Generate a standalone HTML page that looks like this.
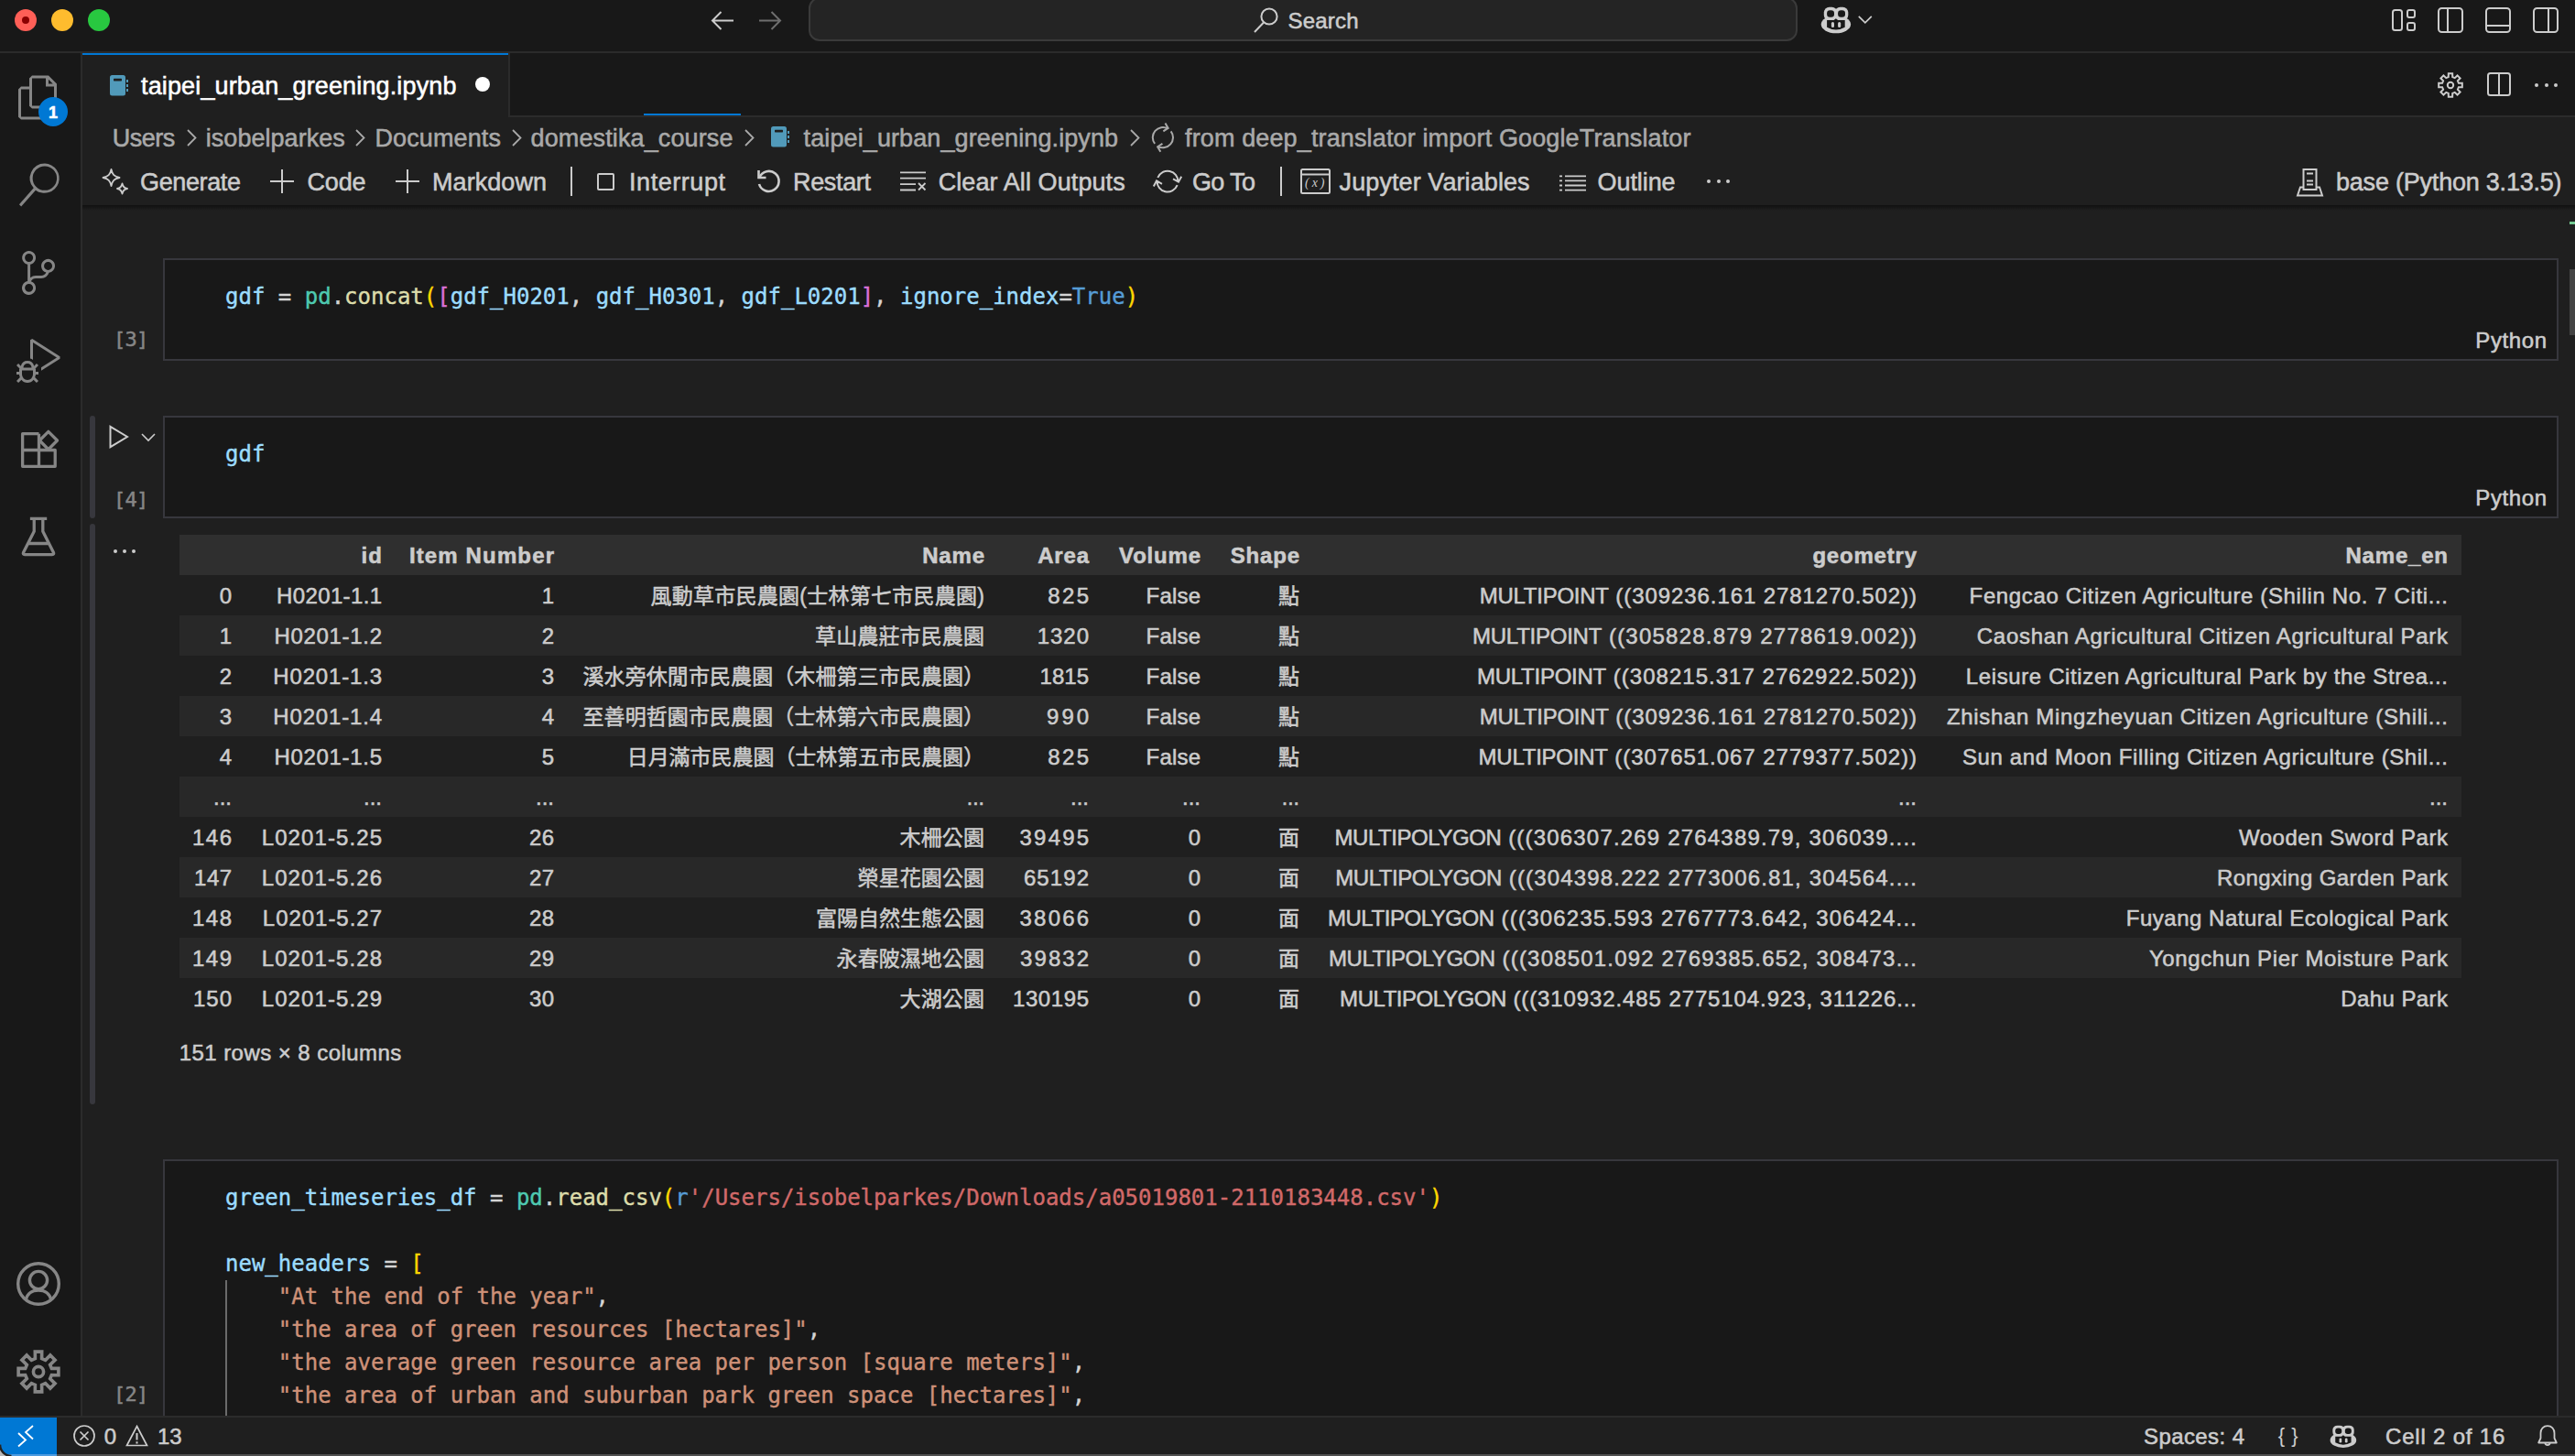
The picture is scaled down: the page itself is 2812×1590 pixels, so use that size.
<!DOCTYPE html><html lang="en"><head><meta charset="utf-8"><title>taipei_urban_greening.ipynb</title><style>
*{box-sizing:border-box;margin:0;padding:0}
html,body{width:2812px;height:1590px;overflow:hidden;background:#1f1f1f}
body{position:relative;-webkit-text-stroke:0.55px;font-family:'Liberation Sans','Noto Sans CJK TC',sans-serif;font-size:26px;color:#ccc;-webkit-font-smoothing:antialiased}
.abs{position:absolute}
.t{position:absolute;white-space:pre;line-height:1}
svg{position:absolute;overflow:visible}
#titlebar{left:0;top:0;width:2812px;height:56px;background:#181818}
#tbline{left:0;top:56px;width:2812px;height:2px;background:#2b2b2b}
#activity{left:0;top:58px;width:88px;height:1488px;background:#181818}
#actline{left:88px;top:58px;width:2px;height:1488px;background:#2b2b2b}
#tabbar{left:90px;top:58px;width:2722px;height:68px;background:#181818}
#tabbarline{left:90px;top:126px;width:2722px;height:2px;background:#2b2b2b}
#tab{left:90px;top:58px;width:465px;height:70px;background:#1f1f1f;border-top:2px solid #0078d4}
#tabr{left:555px;top:58px;width:2px;height:68px;background:#2b2b2b}
#prog{left:703px;top:124px;width:106px;height:2px;background:#0078d4}
#shadow{left:90px;top:224px;width:2722px;height:6px;background:linear-gradient(#00000078,#00000000)}
.cell{position:absolute;left:178px;width:2616px;background:#181818;border:2px solid #37373d}
.code{position:absolute;-webkit-text-stroke:0.4px;left:246px;font-family:'DejaVu Sans Mono','Liberation Mono',monospace;font-size:24px;line-height:36px;white-space:pre;color:#ccc}
.v{color:#9cdcfe}.c{color:#4ec9b0}.f{color:#dcdcaa}.y{color:#ffd700}.m{color:#da70d6}.k{color:#569cd6}.s{color:#ce9178}.r{color:#d16969}.w{color:#d4d4d4}
.exec{position:absolute;font-family:'DejaVu Sans Mono','Liberation Mono',monospace;font-size:22px;color:#868686;line-height:1;white-space:pre}
.lang{position:absolute;font-size:24px;color:#ccc;line-height:1;white-space:pre}
.exec{-webkit-text-stroke:0.5px;letter-spacing:-0.8px}
.focus{position:absolute;left:98px;width:6px;border-radius:3px;background:#37373d}
table{position:absolute;left:196px;top:584px;border-collapse:collapse;table-layout:fixed;font-size:24px;color:#ccc;width:2492px}
td,th{height:44px;text-align:right;padding:2px 15px 0 0;white-space:pre;overflow:visible;font-weight:400;line-height:42px;vertical-align:top}
th{font-weight:700}
thead tr{background:#2f2f2f}
tbody tr:nth-child(even){background:#282828}
#status{left:0;top:1546px;width:2812px;height:44px;background:#1f1f1f;border-top:2px solid #2b2b2b}
#remote{left:0;top:1548px;width:62px;height:42px;background:#0078d4;border-bottom-left-radius:12px}
</style></head><body>
<div class="abs" id="titlebar"></div><div class="abs" id="tbline"></div>
<div class="abs" style="left:16px;top:10px;width:24px;height:24px;border-radius:50%;background:#ff5f57"></div>
<div class="abs" style="left:24px;top:18px;width:8px;height:8px;border-radius:50%;background:#8b0000"></div>
<div class="abs" style="left:56px;top:10px;width:24px;height:24px;border-radius:50%;background:#febc2e"></div>
<div class="abs" style="left:96px;top:10px;width:24px;height:24px;border-radius:50%;background:#28c840"></div>
<svg style="left:776px;top:12px" width="26" height="22" viewBox="0 0 26 22" fill="none" stroke="#ccc" stroke-width="2"><path d="M25 10.5H2M11.5 1L2 10.5l9.5 9.5"/></svg>
<svg style="left:828px;top:12px" width="26" height="22" viewBox="0 0 26 22" fill="none" stroke="#6f6f6f" stroke-width="2"><path d="M1 10.5h23M14.5 1l9.5 9.5-9.5 9.5"/></svg>
<div class="abs" style="left:883px;top:-3px;width:1080px;height:48px;border-radius:12px;background:#242424;border:2px solid #3a3a3a"></div>
<svg style="left:1369px;top:8px" width="27" height="28" viewBox="0 0 27 28" fill="none" stroke="#ccc" stroke-width="2"><circle cx="17" cy="10" r="8.6"/><path d="M11 16.5L1 27"/></svg>
<svg style="left:1988px;top:7px" width="34" height="30" viewBox="0 0 34 30"><ellipse cx="16.900" cy="19.600" rx="16.200" ry="9.700" fill="#ccc"/>
<rect x="3.800" y=".750" width="14.600" height="14.500" rx="5.800" fill="#ccc"/><rect x="15.700" y=".750" width="14.600" height="14.500" rx="5.800" fill="#ccc"/>
<rect x="7.100" y="4.200" width="7.900" height="7.600" rx="3.200" fill="#181818"/><rect x="19.100" y="4.200" width="7.900" height="7.600" rx="3.200" fill="#181818"/>
<path d="M7.100 15H14.700L16.900 13.200L19.100 15H26.700V22.700Q16.900 28.300 7.100 22.700Z" fill="#181818"/>
<rect x="11.900" y="17.050" width="3.100" height="5.900" rx="1.550" fill="#ccc"/><rect x="19.100" y="17.050" width="3.100" height="5.900" rx="1.550" fill="#ccc"/></svg>
<svg style="left:2029px;top:17.200px" width="16" height="9" viewBox="0 0 16 9" fill="none" stroke="#ccc" stroke-width="1.700"><path d="M.800 .800l7 7 7-7"/></svg>
<svg style="left:2612px;top:10px" width="27" height="24" viewBox="0 0 27 24" fill="none" stroke="#ccc" stroke-width="2"><rect x="1" y="1" width="10" height="22" rx="2.5" /><rect x="17" y="1" width="8" height="8" rx="2" /><rect x="17" y="15" width="8" height="8" rx="2" /></svg>
<svg style="left:2662px;top:8px" width="28" height="28" viewBox="0 0 28 28" fill="none" stroke="#ccc" stroke-width="2"><rect x="1" y="1" width="26" height="26" rx="3.5" /><path d="M11 1v26"/></svg>
<svg style="left:2714px;top:8px" width="28" height="28" viewBox="0 0 28 28" fill="none" stroke="#ccc" stroke-width="2"><rect x="1" y="1" width="26" height="26" rx="3.5" /><path d="M1 20h26"/></svg>
<svg style="left:2766px;top:8px" width="28" height="28" viewBox="0 0 28 28" fill="none" stroke="#ccc" stroke-width="2"><rect x="1" y="1" width="26" height="26" rx="3.5" /><path d="M17 1v26"/></svg>
<div class="abs" id="activity"></div><div class="abs" id="actline"></div>
<svg style="left:18px;top:82px" width="46" height="50" viewBox="0 0 23 24.500" fill="#868686"><path d="M17.500 0h-9L7 1.500V6H2.500L1 7.500v15.070L2.500 24h12.070L16 22.570V18h4.700l1.300-1.430V4.500L17.500 0zm0 2.120l2.380 2.380H17.500V2.120zm-3 20.380h-12v-15H7v9.070L8.500 18h6v4.500zm6-6h-12v-15H16V6h4.500v10.500z"/></svg>
<div class="abs" style="left:42px;top:106px;width:32px;height:32px;border-radius:50%;background:#0078d4"></div>
<svg style="left:18.500px;top:178px" width="46" height="48" viewBox="0 0 23.500 24" fill="#868686"><path d="M15.250 0a8.250 8.250 0 0 0-6.180 13.720L1 22.880l1.120 1.120 8.050-9.120A8.251 8.251 0 1 0 15.250.010V0zm0 15a6.750 6.750 0 1 1 0-13.500 6.750 6.750 0 0 1 0 13.500z"/></svg>
<svg style="left:18px;top:274px" width="44" height="48" viewBox="0 0 22 24" fill="#868686"><path d="M21.007 8.222A3.738 3.738 0 0 0 15.045 5.200a3.737 3.737 0 0 0 1.156 6.583 2.988 2.988 0 0 1-2.668 1.670h-2.990a4.456 4.456 0 0 0-2.989 1.165V7.400a3.737 3.737 0 1 0-1.494 0v9.117a3.776 3.776 0 1 0 1.816.099 2.990 2.990 0 0 1 2.668-1.667h2.990a4.484 4.484 0 0 0 4.223-3.039 3.736 3.736 0 0 0 3.250-3.687zM4.565 3.738a2.242 2.242 0 1 1 4.484 0 2.242 2.242 0 0 1-4.484 0zm4.484 16.441a2.242 2.242 0 1 1-4.484 0 2.242 2.242 0 0 1 4.484 0zm8.221-9.715a2.242 2.242 0 1 1 0-4.485 2.242 2.242 0 0 1 0 4.485z"/></svg>
<svg style="left:18px;top:370px" width="48" height="48" viewBox="0 0 24 24" fill="#868686"><path d="M10.940 13.500l-1.320 1.320a3.730 3.730 0 0 0-7.240 0L1.060 13.500 0 14.560l1.720 1.720-.220.220V18H0v1.500h1.500v.080c.077.489.214.966.410 1.420L0 22.940 1.060 24l1.650-1.650A4.308 4.308 0 0 0 6 24a4.310 4.310 0 0 0 3.290-1.650L10.940 24 12 22.940 10.090 21c.198-.464.336-.951.410-1.450v-.100H12V18h-1.500v-1.500l-.220-.220L12 14.560l-1.060-1.060zM6 13.500a2.250 2.250 0 0 1 2.250 2.250h-4.500A2.250 2.250 0 0 1 6 13.500zm3 6a3.330 3.330 0 0 1-3 3 3.330 3.330 0 0 1-3-3v-2.250h6v2.250zm14.760-9.900v1.260L13.500 17.370V15.600l8.500-5.370L9 2v9.460a5.070 5.070 0 0 0-1.500-.720V.630L8.640 0l15.120 9.600z"/></svg>
<svg style="left:21px;top:467px" width="46" height="46" viewBox="0 0 46 46" fill="none" stroke="#868686" stroke-width="3.300" stroke-linejoin="round"><path d="M21.500 6.650H3.620V42.350H39.220V24.500H3.620M21.500 6.650V42.350"/><path d="M31.860 4.370l9.670 9.670-9.670 9.670-9.670-9.670z"/></svg>
<svg style="left:22px;top:563px" width="40" height="46" viewBox="0 0 40 46" fill="none" stroke="#868686" stroke-width="3.300" stroke-linejoin="round"><path d="M10.860 3.400H29.200M15.250 3.400V17.300L3.600 40.200Q2.600 42.550 5 42.550H35Q37.400 42.550 36.400 40.200L24.800 17.300V3.400M8.500 30.500H31.500"/></svg>
<svg style="left:18px;top:1378px" width="48" height="48" viewBox="0 0 48 48" fill="none" stroke="#868686" stroke-width="3.400"><circle cx="24" cy="24" r="22.300"/><circle cx="24" cy="20" r="9.600"/><path d="M10.200 41.500c1.500-7 7-10.500 13.800-10.500s12.300 3.500 13.800 10.500"/></svg>
<svg style="left:18px;top:1474px" width="48" height="48" viewBox="0 0 48 48" fill="none" stroke="#868686" stroke-width="3.600" stroke-linejoin="miter"><path d="M20.40 9.64 L20.31 2.11 L27.69 2.11 L27.60 9.64 L31.61 11.31 L36.87 5.91 L42.09 11.13 L36.69 16.39 L38.36 20.40 L45.89 20.31 L45.89 27.69 L38.36 27.60 L36.69 31.61 L42.09 36.87 L36.87 42.09 L31.61 36.69 L27.60 38.36 L27.69 45.89 L20.31 45.89 L20.40 38.36 L16.39 36.69 L11.13 42.09 L5.91 36.87 L11.31 31.61 L9.64 27.60 L2.11 27.69 L2.11 20.31 L9.64 20.40 L11.31 16.39 L5.91 11.13 L11.13 5.91 L16.39 11.31Z"/><circle cx="24" cy="24" r="5.600"/></svg>
<div class="abs" id="tabbar"></div><div class="abs" id="tabbarline"></div><div class="abs" id="tab"></div><div class="abs" id="tabr"></div><div class="abs" id="prog"></div>
<svg style="left:119.500px;top:81.500px" width="20" height="22.500" viewBox="0 0 20 22.500"><rect x="0" y="0" width="17" height="22.500" rx="2.500" fill="#519aba"/><rect x="4" y="3.800" width="9" height="2.600" rx=".6" fill="#1f1f1f"/><rect x="18" y="5" width="2" height="3" fill="#519aba"/><rect x="18" y="10" width="2" height="3" fill="#519aba"/><rect x="18" y="15" width="2" height="3" fill="#519aba"/></svg>
<div class="abs" style="left:519px;top:84px;width:16px;height:16px;border-radius:50%;background:#fff"></div>
<svg style="left:2662px;top:79px" width="28" height="28" viewBox="0 0 28 28" fill="none" stroke="#ccc" stroke-width="2"><path d="M11.76 5.08 L11.84 1.18 L16.16 1.18 L16.24 5.08 L18.73 6.11 L21.54 3.41 L24.59 6.46 L21.89 9.27 L22.92 11.76 L26.82 11.84 L26.82 16.16 L22.92 16.24 L21.89 18.73 L24.59 21.54 L21.54 24.59 L18.73 21.89 L16.24 22.92 L16.16 26.82 L11.84 26.82 L11.76 22.92 L9.27 21.89 L6.46 24.59 L3.41 21.54 L6.11 18.73 L5.08 16.24 L1.18 16.16 L1.18 11.84 L5.08 11.76 L6.11 9.27 L3.41 6.46 L6.46 3.41 L9.27 6.11Z"/><circle cx="14" cy="14" r="3.200"/></svg>
<svg style="left:2716px;top:79px" width="26" height="26" viewBox="0 0 26 26" fill="none" stroke="#ccc" stroke-width="2"><rect x="1" y="1" width="24" height="24" rx="2.5" /><path d="M13 1v24"/></svg>
<div class="abs" style="left:2768.0px;top:91px;width:4px;height:4px;border-radius:50%;background:#ccc"></div>
<div class="abs" style="left:2778.5px;top:91px;width:4px;height:4px;border-radius:50%;background:#ccc"></div>
<div class="abs" style="left:2789.0px;top:91px;width:4px;height:4px;border-radius:50%;background:#ccc"></div>
<svg style="left:204px;top:141px" width="11" height="19" viewBox="0 0 11 19" fill="none" stroke="#a9a9a9" stroke-width="1.800"><path d="M1 1l8.500 8.500L1 18"/></svg>
<svg style="left:388px;top:141px" width="11" height="19" viewBox="0 0 11 19" fill="none" stroke="#a9a9a9" stroke-width="1.800"><path d="M1 1l8.500 8.500L1 18"/></svg>
<svg style="left:559px;top:141px" width="11" height="19" viewBox="0 0 11 19" fill="none" stroke="#a9a9a9" stroke-width="1.800"><path d="M1 1l8.500 8.500L1 18"/></svg>
<svg style="left:812.5px;top:141px" width="11" height="19" viewBox="0 0 11 19" fill="none" stroke="#a9a9a9" stroke-width="1.800"><path d="M1 1l8.500 8.500L1 18"/></svg>
<svg style="left:1233.5px;top:141px" width="11" height="19" viewBox="0 0 11 19" fill="none" stroke="#a9a9a9" stroke-width="1.800"><path d="M1 1l8.500 8.500L1 18"/></svg>
<svg style="left:842px;top:138px" width="20" height="22.500" viewBox="0 0 20 22.500"><rect x="0" y="0" width="17" height="22.500" rx="2.500" fill="#519aba"/><rect x="4" y="3.800" width="9" height="2.600" rx=".6" fill="#1f1f1f"/><rect x="18" y="5" width="2" height="3" fill="#519aba"/><rect x="18" y="10" width="2" height="3" fill="#519aba"/><rect x="18" y="15" width="2" height="3" fill="#519aba"/></svg>
<svg style="left:0;top:0" width="2812" height="300" viewBox="0 0 2812 300" fill="none" stroke="#a9a9a9" stroke-width="2" stroke-linejoin="miter"><path d="M1261.15 156.93A11.1 11.1 0 0 1 1275.37 140.44M1270.35 143.30L1275.66 139.92L1272.46 134.49M1278.65 143.27A11.1 11.1 0 0 1 1264.43 159.76M1269.45 156.90L1264.14 160.28L1267.34 165.71"/></svg>
<svg style="left:111px;top:184px" width="30" height="30" viewBox="0 0 30 30" fill="none" stroke="#ccc" stroke-width="1.800" stroke-linejoin="round"><path d="M10.500 1c1.200 5.800 3.200 7.800 9 9-5.800 1.200-7.800 3.200-9 9-1.200-5.800-3.200-7.800-9-9 5.800-1.200 7.800-3.200 9-9z"/><path d="M22.500 16.500c.7 3.500 2 4.800 5.500 5.500-3.500.7-4.800 2-5.500 5.500-.7-3.500-2-4.800-5.500-5.500 3.500-.7 4.800-2 5.500-5.500z"/></svg>
<svg style="left:295px;top:185px" width="26" height="26" viewBox="0 0 26 26" fill="none" stroke="#ccc" stroke-width="2"><path d="M13 0v26M0 13h26"/></svg>
<svg style="left:432px;top:185px" width="26" height="26" viewBox="0 0 26 26" fill="none" stroke="#ccc" stroke-width="2"><path d="M13 0v26M0 13h26"/></svg>
<div class="abs" style="left:622.500px;top:182px;width:2px;height:32px;background:#ccc"></div>
<div class="abs" style="left:652px;top:189px;width:18.500px;height:18.500px;border:2.200px solid #ccc;border-radius:2px"></div>
<svg style="left:826px;top:185px" width="27" height="26" viewBox="0 0 27 26" fill="none" stroke="#ccc" stroke-width="2.600"><path d="M3.500 8.500A11 11 0 1 1 3 16"/><path d="M2.500 1v8h8" stroke-linejoin="miter"/></svg>
<svg style="left:983px;top:187px" width="30" height="22" viewBox="0 0 30 22" fill="none" stroke="#ccc" stroke-width="1.800"><path d="M0 1.300h28M0 7.700h28M0 14.100h17M0 20.500h17M20 13l7.500 7.500M27.500 13l-7.500 7.500"/></svg>
<svg style="left:0;top:0" width="2812" height="300" viewBox="0 0 2812 300" fill="none" stroke="#ccc" stroke-width="2" stroke-linejoin="miter"><path d="M1264.36 194.01A11.4 11.4 0 0 1 1286.38 198.70M1281.04 195.43L1286.98 198.73L1290.18 192.72M1285.64 202.19A11.4 11.4 0 0 1 1263.62 197.50M1268.96 200.77L1263.02 197.47L1259.82 203.48"/></svg>
<div class="abs" style="left:1398px;top:182px;width:2px;height:32px;background:#ccc"></div>
<svg style="left:1419.500px;top:184px" width="33" height="28" viewBox="0 0 33 28" fill="none" stroke="#ccc" stroke-width="2"><rect x="1" y="1" width="31" height="26" rx="1.500"/><path d="M1 6.500h31"/></svg>
<svg style="left:1703px;top:191px" width="29" height="18" viewBox="0 0 29 18" fill="none" stroke="#ccc" stroke-width="1.800"><path d="M0 1.400h3M6 1.400h23M0 6.450h3M6 6.450h23M0 11.500h3M6 11.500h23M0 16.550h3M6 16.550h23"/></svg>
<div class="abs" style="left:1864.0px;top:196px;width:4px;height:4px;border-radius:50%;background:#ccc"></div>
<div class="abs" style="left:1874.5px;top:196px;width:4px;height:4px;border-radius:50%;background:#ccc"></div>
<div class="abs" style="left:1885.0px;top:196px;width:4px;height:4px;border-radius:50%;background:#ccc"></div>
<svg style="left:2508px;top:183.500px" width="29" height="31" viewBox="0 0 29 31" fill="none" stroke="#ccc" stroke-width="2"><path d="M7.500 1h14v22h-14zM7.500 20.500H4L1 29.500h27l-3-9h-3.500M11 5.500h7M11 13.500h7M11 17.500h7"/></svg>
<div class="abs" id="shadow"></div>
<div class="cell" style="top:282px;height:112px"></div>
<div class="code" style="top:306px"><span class="v">gdf</span> <span class="w">=</span> <span class="c">pd</span><span class="w">.</span><span class="f">concat</span><span class="y">(</span><span class="m">[</span><span class="v">gdf_H0201</span><span class="w">,</span> <span class="v">gdf_H0301</span><span class="w">,</span> <span class="v">gdf_L0201</span><span class="m">]</span><span class="w">,</span> <span class="v">ignore_index</span><span class="w">=</span><span class="k">True</span><span class="y">)</span></div>
<div class="exec" style="left:124px;top:360.400px">[3]</div>
<div class="cell" style="top:454px;height:112px"></div>
<div class="code" style="top:478px"><span class="v">gdf</span></div>
<div class="exec" style="left:124px;top:535.100px">[4]</div>
<div class="focus" style="top:454px;height:112px"></div><div class="focus" style="top:572px;height:634px"></div>
<svg style="left:119px;top:464px" width="22" height="26" viewBox="0 0 22 26" fill="none" stroke="#ccc" stroke-width="2" stroke-linejoin="miter"><path d="M1.500 1.800L20 13 1.500 24.200z"/></svg>
<svg style="left:154px;top:473px" width="16" height="9" viewBox="0 0 16 9" fill="none" stroke="#ccc" stroke-width="1.600"><path d="M1 1l7 7 7-7"/></svg>
<div class="abs" style="left:124px;top:600px;width:4px;height:4px;border-radius:50%;background:#ccc"></div>
<div class="abs" style="left:134px;top:600px;width:4px;height:4px;border-radius:50%;background:#ccc"></div>
<div class="abs" style="left:144px;top:600px;width:4px;height:4px;border-radius:50%;background:#ccc"></div>
<div class="abs" style="left:2806px;top:294px;width:6px;height:72px;background:#434343"></div>
<div class="abs" style="left:2806px;top:242px;width:6px;height:3px;background:#73c991"></div>
<table><colgroup><col style="width:72px"><col style="width:164px"><col style="width:188px"><col style="width:470px"><col style="width:114px"><col style="width:122px"><col style="width:108px"><col style="width:674px"><col style="width:580px"></colgroup><thead><tr><th style="letter-spacing:0.800px;padding-right:14.200px;"></th><th style="letter-spacing:1.272px;padding-right:13.728px;">id</th><th style="letter-spacing:1.140px;padding-right:13.860px;">Item Number</th><th style="letter-spacing:0.800px;padding-right:14.200px;">Name</th><th style="letter-spacing:0.800px;padding-right:14.200px;">Area</th><th style="letter-spacing:0.800px;padding-right:14.200px;">Volume</th><th style="letter-spacing:0.800px;padding-right:14.200px;">Shape</th><th style="letter-spacing:0.800px;padding-right:14.200px;">geometry</th><th style="letter-spacing:0.800px;padding-right:14.200px;">Name_en</th></tr></thead><tbody><tr><td style="letter-spacing:0.400px;padding-right:14.600px;">0</td><td style="letter-spacing:0.353px;padding-right:14.647px;">H0201-1.1</td><td style="letter-spacing:0.400px;padding-right:14.600px;">1</td><td style="font-size:23px;letter-spacing:0.267px;padding-right:14.733px;">風動草市民農園(士林第七市民農園)</td><td style="letter-spacing:2.377px;padding-right:12.623px;">825</td><td style="letter-spacing:0.200px;padding-right:14.800px;">False</td><td style="font-size:23px;">點</td><td style="letter-spacing:0.924px;padding-right:14.076px"><span style="letter-spacing:-0.25px">MULTIPOINT</span> ((309236.161 2781270.502))</td><td style="letter-spacing:0.629px;padding-right:14.371px;">Fengcao Citizen Agriculture (Shilin No. 7 Citi...</td></tr><tr><td style="letter-spacing:0.400px;padding-right:14.600px;">1</td><td style="letter-spacing:0.690px;padding-right:14.310px;">H0201-1.2</td><td style="letter-spacing:0.400px;padding-right:14.600px;">2</td><td style="font-size:23px;letter-spacing:0.143px;padding-right:14.857px;">草山農莊市民農園</td><td style="letter-spacing:0.970px;padding-right:14.030px;">1320</td><td style="letter-spacing:0.200px;padding-right:14.800px;">False</td><td style="font-size:23px;">點</td><td style="letter-spacing:1.220px;padding-right:13.780px"><span style="letter-spacing:-0.25px">MULTIPOINT</span> ((305828.879 2778619.002))</td><td style="letter-spacing:0.695px;padding-right:14.305px;">Caoshan Agricultural Citizen Agricultural Park</td></tr><tr><td style="letter-spacing:0.400px;padding-right:14.600px;">2</td><td style="letter-spacing:0.828px;padding-right:14.172px;">H0201-1.3</td><td style="letter-spacing:0.400px;padding-right:14.600px;">3</td><td style="font-size:23px;letter-spacing:0.083px;padding-right:14.917px;">溪水旁休閒市民農園（木柵第三市民農園）</td><td style="letter-spacing:0.036px;padding-right:14.964px;">1815</td><td style="letter-spacing:0.200px;padding-right:14.800px;">False</td><td style="font-size:23px;">點</td><td style="letter-spacing:1.028px;padding-right:13.972px"><span style="letter-spacing:-0.25px">MULTIPOINT</span> ((308215.317 2762922.502))</td><td style="letter-spacing:0.626px;padding-right:14.374px;">Leisure Citizen Agricultural Park by the Strea...</td></tr><tr><td style="letter-spacing:0.400px;padding-right:14.600px;">3</td><td style="letter-spacing:0.828px;padding-right:14.172px;">H0201-1.4</td><td style="letter-spacing:0.400px;padding-right:14.600px;">4</td><td style="font-size:23px;letter-spacing:0.083px;padding-right:14.917px;">至善明哲園市民農園（士林第六市民農園）</td><td style="letter-spacing:2.927px;padding-right:12.073px;">990</td><td style="letter-spacing:0.200px;padding-right:14.800px;">False</td><td style="font-size:23px;">點</td><td style="letter-spacing:0.924px;padding-right:14.076px"><span style="letter-spacing:-0.25px">MULTIPOINT</span> ((309236.161 2781270.502))</td><td style="letter-spacing:0.670px;padding-right:14.330px;">Zhishan Mingzheyuan Citizen Agriculture (Shili...</td></tr><tr><td style="letter-spacing:0.400px;padding-right:14.600px;">4</td><td style="letter-spacing:0.690px;padding-right:14.310px;">H0201-1.5</td><td style="letter-spacing:0.400px;padding-right:14.600px;">5</td><td style="font-size:23px;letter-spacing:-0.044px;padding-right:15.044px;">日月滿市民農園（士林第五市民農園）</td><td style="letter-spacing:2.377px;padding-right:12.623px;">825</td><td style="letter-spacing:0.200px;padding-right:14.800px;">False</td><td style="font-size:23px;">點</td><td style="letter-spacing:0.966px;padding-right:14.034px"><span style="letter-spacing:-0.25px">MULTIPOINT</span> ((307651.067 2779377.502))</td><td style="letter-spacing:0.622px;padding-right:14.378px;">Sun and Moon Filling Citizen Agriculture (Shil...</td></tr><tr><td>...</td><td>...</td><td>...</td><td style="font-size:23px;">...</td><td>...</td><td>...</td><td style="font-size:23px;">...</td><td>...</td><td>...</td></tr><tr><td style="letter-spacing:1.527px;padding-right:13.473px;">146</td><td style="letter-spacing:1.094px;padding-right:13.906px;">L0201-5.25</td><td style="letter-spacing:0.400px;padding-right:14.600px;">26</td><td style="font-size:23px;letter-spacing:0.133px;padding-right:14.867px;">木柵公園</td><td style="letter-spacing:2.163px;padding-right:12.837px;">39495</td><td style="letter-spacing:0.200px;padding-right:14.800px;">0</td><td style="font-size:23px;">面</td><td style="letter-spacing:1.185px;padding-right:13.815px"><span style="letter-spacing:-0.45px">MULTIPOLYGON</span> (((306307.269 2764389.79, 306039....</td><td style="letter-spacing:0.521px;padding-right:14.479px;">Wooden Sword Park</td></tr><tr><td style="letter-spacing:0.427px;padding-right:14.573px;">147</td><td style="letter-spacing:1.094px;padding-right:13.906px;">L0201-5.26</td><td style="letter-spacing:0.400px;padding-right:14.600px;">27</td><td style="font-size:23px;letter-spacing:0.080px;padding-right:14.920px;">榮星花園公園</td><td style="letter-spacing:1.087px;padding-right:13.913px;">65192</td><td style="letter-spacing:0.200px;padding-right:14.800px;">0</td><td style="font-size:23px;">面</td><td style="letter-spacing:1.168px;padding-right:13.832px"><span style="letter-spacing:-0.45px">MULTIPOLYGON</span> (((304398.222 2773006.81, 304564....</td><td style="letter-spacing:0.419px;padding-right:14.581px;">Rongxing Garden Park</td></tr><tr><td style="letter-spacing:1.527px;padding-right:13.473px;">148</td><td style="letter-spacing:0.972px;padding-right:14.028px;">L0201-5.27</td><td style="letter-spacing:0.400px;padding-right:14.600px;">28</td><td style="font-size:23px;letter-spacing:-0.014px;padding-right:15.014px;">富陽自然生態公園</td><td style="letter-spacing:2.163px;padding-right:12.837px;">38066</td><td style="letter-spacing:0.200px;padding-right:14.800px;">0</td><td style="font-size:23px;">面</td><td style="letter-spacing:1.213px;padding-right:13.787px"><span style="letter-spacing:-0.45px">MULTIPOLYGON</span> (((306235.593 2767773.642, 306424...</td><td style="letter-spacing:0.522px;padding-right:14.478px;">Fuyang Natural Ecological Park</td></tr><tr><td style="letter-spacing:1.527px;padding-right:13.473px;">149</td><td style="letter-spacing:1.094px;padding-right:13.906px;">L0201-5.28</td><td style="letter-spacing:0.400px;padding-right:14.600px;">29</td><td style="font-size:23px;letter-spacing:0.067px;padding-right:14.933px;">永春陂濕地公園</td><td style="letter-spacing:2.038px;padding-right:12.962px;">39832</td><td style="letter-spacing:0.200px;padding-right:14.800px;">0</td><td style="font-size:23px;">面</td><td style="letter-spacing:1.183px;padding-right:13.817px"><span style="letter-spacing:-0.45px">MULTIPOLYGON</span> (((308501.092 2769385.652, 308473...</td><td style="letter-spacing:0.621px;padding-right:14.379px;">Yongchun Pier Moisture Park</td></tr><tr><td style="letter-spacing:0.977px;padding-right:14.023px;">150</td><td style="letter-spacing:1.094px;padding-right:13.906px;">L0201-5.29</td><td style="letter-spacing:0.400px;padding-right:14.600px;">30</td><td style="font-size:23px;letter-spacing:0.133px;padding-right:14.867px;">大湖公園</td><td style="letter-spacing:0.581px;padding-right:14.419px;">130195</td><td style="letter-spacing:0.200px;padding-right:14.800px;">0</td><td style="font-size:23px;">面</td><td style="letter-spacing:0.896px;padding-right:14.104px"><span style="letter-spacing:-0.45px">MULTIPOLYGON</span> (((310932.485 2775104.923, 311226...</td><td style="letter-spacing:0.414px;padding-right:14.586px;">Dahu Park</td></tr></tbody></table>
<div class="cell" style="top:1266px;height:300px;border-bottom:none"></div>
<div class="abs" style="left:246px;top:1398px;width:2px;height:148px;background:#6b6b6b"></div>
<div class="code" style="top:1290px"><span class="v">green_timeseries_df</span> <span class="w">=</span> <span class="c">pd</span><span class="w">.</span><span class="f">read_csv</span><span class="y">(</span><span class="k">r</span><span class="r">'/Users/isobelparkes/Downloads/a05019801-2110183448.csv'</span><span class="y">)</span>

<span class="v">new_headers</span> <span class="w">=</span> <span class="y">[</span>
    <span class="s">"At the end of the year"</span><span class="w">,</span>
    <span class="s">"the area of green resources [hectares]"</span><span class="w">,</span>
    <span class="s">"the average green resource area per person [square meters]"</span><span class="w">,</span>
    <span class="s">"the area of urban and suburban park green space [hectares]"</span><span class="w">,</span></div>
<div class="exec" style="left:124px;top:1512.400px">[2]</div>
<div class="abs" id="status"></div><div class="abs" id="remote"></div>
<svg style="left:19px;top:1556px" width="18" height="24" viewBox="0 0 18 24" fill="none" stroke="#fff" stroke-width="1.800"><path d="M1 9l8 7.500L1 23.500M17 1L9 8l8 7.500"/></svg>
<svg style="left:79.500px;top:1556px" width="24" height="24" viewBox="0 0 24 24" fill="none" stroke="#ccc" stroke-width="1.700"><circle cx="12" cy="12" r="11"/><path d="M7.500 7.500l9 9M16.500 7.500l-9 9"/></svg>
<svg style="left:136.500px;top:1556px" width="25" height="24" viewBox="0 0 25 24" fill="none" stroke="#ccc" stroke-width="1.700" stroke-linejoin="miter"><path d="M12.500 1.500L23.500 22.500h-22z"/><path d="M12.500 9v7.500M12.500 18.300v2.200" stroke-width="2"/></svg>
<svg style="left:2543.500px;top:1555.500px" width="30" height="25.500" viewBox="0 0 34 30" preserveAspectRatio="none"><ellipse cx="16.900" cy="19.600" rx="16.200" ry="9.700" fill="#ccc"/>
<rect x="3.800" y=".750" width="14.600" height="14.500" rx="5.800" fill="#ccc"/><rect x="15.700" y=".750" width="14.600" height="14.500" rx="5.800" fill="#ccc"/>
<rect x="7.100" y="4.200" width="7.900" height="7.600" rx="3.200" fill="#181818"/><rect x="19.100" y="4.200" width="7.900" height="7.600" rx="3.200" fill="#181818"/>
<path d="M7.100 15H14.700L16.900 13.200L19.100 15H26.700V22.700Q16.900 28.300 7.100 22.700Z" fill="#181818"/>
<rect x="11.900" y="17.050" width="3.100" height="5.900" rx="1.550" fill="#ccc"/><rect x="19.100" y="17.050" width="3.100" height="5.900" rx="1.550" fill="#ccc"/></svg>
<svg style="left:2771px;top:1556px" width="22" height="24" viewBox="0 0 22 24" fill="none" stroke="#ccc" stroke-width="1.800"><path d="M11 1.200c-4.500 0-7.500 3.300-7.500 7.800v5.500L1.200 19.500h19.600L18.500 14.500V9c0-4.500-3-7.800-7.500-7.800z" stroke-linejoin="round"/><path d="M8.300 20a2.800 2.800 0 0 0 5.400 0"/></svg>
<div class="abs" style="left:0;top:1588px;width:2812px;height:2px;background:#505050"></div><div class="abs" style="left:0;top:1588px;width:62px;height:2px;background:#4c9be0"></div>
<svg style="left:0;top:1576px" width="14" height="14" viewBox="0 0 14 14"><path d="M0 0V14H14A14 14 0 0 1 0 0Z" fill="#b8b8b8"/><path d="M0 1.500A12.500 12.500 0 0 0 12.500 14" fill="none" stroke="#222" stroke-width="2.500"/></svg>
<div class="t" style="left:1406.6px;top:10.68px;font-family:'Liberation Sans','Noto Sans CJK TC',sans-serif;font-size:24px;font-weight:400;color:#ccc;letter-spacing:0.191px;">Search</div>
<div class="t" style="left:53px;top:113.76px;font-family:'Liberation Sans','Noto Sans CJK TC',sans-serif;font-size:18px;font-weight:700;color:#fff;">1</div>
<div class="t" style="left:154px;top:81.34px;font-family:'Liberation Sans','Noto Sans CJK TC',sans-serif;font-size:27px;font-weight:400;color:#fff;letter-spacing:0.143px;">taipei_urban_greening.ipynb</div>
<div class="t" style="left:122.8px;top:138.34px;font-family:'Liberation Sans','Noto Sans CJK TC',sans-serif;font-size:27px;font-weight:400;color:#a9a9a9;letter-spacing:-0.529px;">Users</div>
<div class="t" style="left:224.8px;top:138.34px;font-family:'Liberation Sans','Noto Sans CJK TC',sans-serif;font-size:27px;font-weight:400;color:#a9a9a9;letter-spacing:0.037px;">isobelparkes</div>
<div class="t" style="left:409.5px;top:138.34px;font-family:'Liberation Sans','Noto Sans CJK TC',sans-serif;font-size:27px;font-weight:400;color:#a9a9a9;letter-spacing:0.117px;">Documents</div>
<div class="t" style="left:579.5px;top:138.34px;font-family:'Liberation Sans','Noto Sans CJK TC',sans-serif;font-size:27px;font-weight:400;color:#a9a9a9;letter-spacing:0.125px;">domestika_course</div>
<div class="t" style="left:877.6px;top:138.34px;font-family:'Liberation Sans','Noto Sans CJK TC',sans-serif;font-size:27px;font-weight:400;color:#a9a9a9;letter-spacing:0.105px;">taipei_urban_greening.ipynb</div>
<div class="t" style="left:1294px;top:138.34px;font-family:'Liberation Sans','Noto Sans CJK TC',sans-serif;font-size:27px;font-weight:400;color:#a9a9a9;letter-spacing:0.134px;">from deep_translator import GoogleTranslator</div>
<div class="t" style="left:153px;top:186.34px;font-family:'Liberation Sans','Noto Sans CJK TC',sans-serif;font-size:27px;font-weight:400;color:#ccc;letter-spacing:-0.368px;">Generate</div>
<div class="t" style="left:335.5px;top:186.34px;font-family:'Liberation Sans','Noto Sans CJK TC',sans-serif;font-size:27px;font-weight:400;color:#ccc;letter-spacing:-0.182px;">Code</div>
<div class="t" style="left:472px;top:186.34px;font-family:'Liberation Sans','Noto Sans CJK TC',sans-serif;font-size:27px;font-weight:400;color:#ccc;letter-spacing:0.065px;">Markdown</div>
<div class="t" style="left:687px;top:186.34px;font-family:'Liberation Sans','Noto Sans CJK TC',sans-serif;font-size:27px;font-weight:400;color:#ccc;letter-spacing:0.555px;">Interrupt</div>
<div class="t" style="left:866px;top:186.34px;font-family:'Liberation Sans','Noto Sans CJK TC',sans-serif;font-size:27px;font-weight:400;color:#ccc;letter-spacing:-0.339px;">Restart</div>
<div class="t" style="left:1024.7px;top:186.34px;font-family:'Liberation Sans','Noto Sans CJK TC',sans-serif;font-size:27px;font-weight:400;color:#ccc;letter-spacing:0.088px;">Clear All Outputs</div>
<div class="t" style="left:1302px;top:186.34px;font-family:'Liberation Sans','Noto Sans CJK TC',sans-serif;font-size:27px;font-weight:400;color:#ccc;letter-spacing:-0.641px;">Go To</div>
<div class="t" style="left:1425px;top:193.08px;font-family:'Liberation Serif',serif;font-size:14px;font-weight:400;color:#ccc;font-style:italic;-webkit-text-stroke:0;letter-spacing:2.977px;">(x)</div>
<div class="t" style="left:1462.6px;top:186.34px;font-family:'Liberation Sans','Noto Sans CJK TC',sans-serif;font-size:27px;font-weight:400;color:#ccc;letter-spacing:0.087px;">Jupyter Variables</div>
<div class="t" style="left:1744.6px;top:186.34px;font-family:'Liberation Sans','Noto Sans CJK TC',sans-serif;font-size:27px;font-weight:400;color:#ccc;letter-spacing:-0.094px;">Outline</div>
<div class="t" style="left:2551px;top:186.34px;font-family:'Liberation Sans','Noto Sans CJK TC',sans-serif;font-size:27px;font-weight:400;color:#ccc;letter-spacing:-0.214px;">base (Python 3.13.5)</div>
<div class="t" style="left:2703.3px;top:359.68px;font-family:'Liberation Sans','Noto Sans CJK TC',sans-serif;font-size:24px;font-weight:400;color:#ccc;letter-spacing:0.596px;">Python</div>
<div class="t" style="left:2703.3px;top:531.68px;font-family:'Liberation Sans','Noto Sans CJK TC',sans-serif;font-size:24px;font-weight:400;color:#ccc;letter-spacing:0.596px;">Python</div>
<div class="t" style="left:195.7px;top:1137.68px;font-family:'Liberation Sans','Noto Sans CJK TC',sans-serif;font-size:24px;font-weight:400;color:#ccc;letter-spacing:0.446px;">151 rows × 8 columns</div>
<div class="t" style="left:113.7px;top:1556.68px;font-family:'Liberation Sans','Noto Sans CJK TC',sans-serif;font-size:24px;font-weight:400;color:#ccc;">0</div>
<div class="t" style="left:172px;top:1556.68px;font-family:'Liberation Sans','Noto Sans CJK TC',sans-serif;font-size:24px;font-weight:400;color:#ccc;letter-spacing:-0.103px;">13</div>
<div class="t" style="left:2341px;top:1556.68px;font-family:'Liberation Sans','Noto Sans CJK TC',sans-serif;font-size:24px;font-weight:400;color:#ccc;letter-spacing:0.408px;">Spaces: 4</div>
<div class="t" style="left:2487.7px;top:1556.88px;font-family:'Liberation Sans','Noto Sans CJK TC',sans-serif;font-size:22px;font-weight:400;color:#ccc;-webkit-text-stroke:0;letter-spacing:0.594px;">{ }</div>
<div class="t" style="left:2605px;top:1556.68px;font-family:'Liberation Sans','Noto Sans CJK TC',sans-serif;font-size:24px;font-weight:400;color:#ccc;letter-spacing:0.809px;">Cell 2 of 16</div>
</body></html>
